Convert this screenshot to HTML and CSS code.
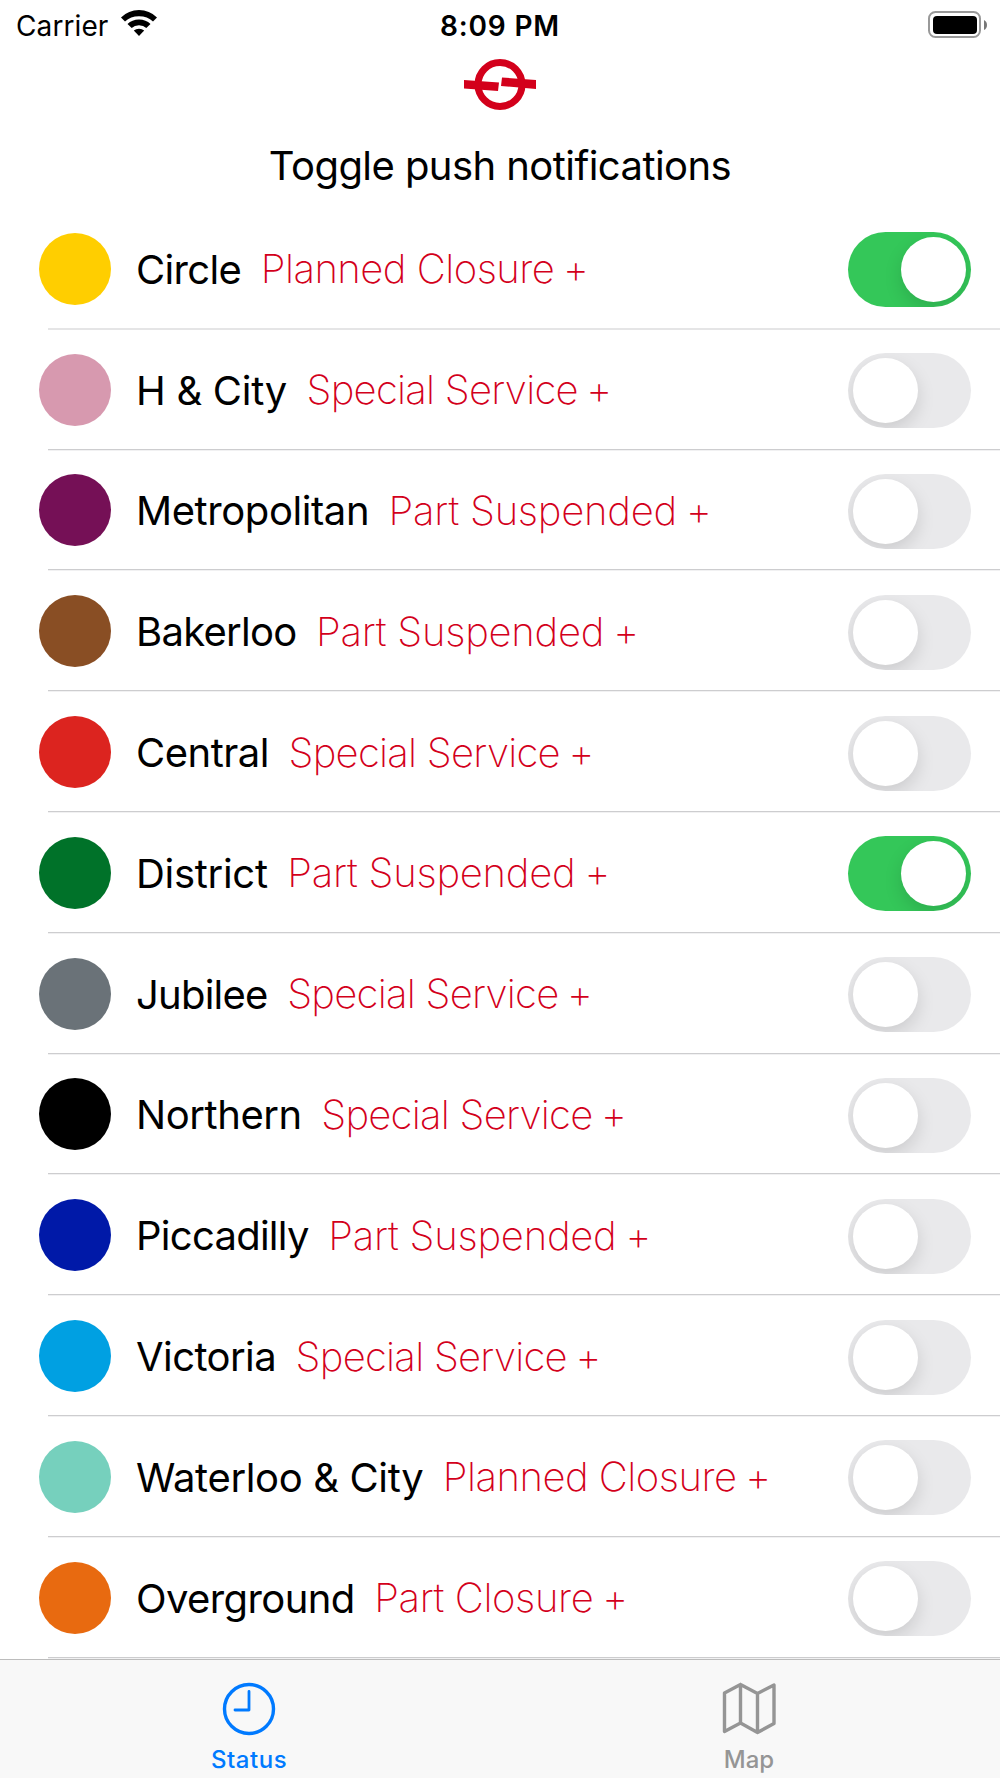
FILE: index.html
```html
<!DOCTYPE html>
<html lang="en">
<head>
<meta charset="utf-8">
<title>Line status</title>
<link rel="stylesheet" href="styles.css">
</head>
<body>
<div class="app">
  <header class="statusbar">
    <div class="carrier"><span class="carrier-name">Carrier</span>
      <svg class="wifi" viewBox="0 0 38 28"><path d="M1 8.500Q8.500 1 19 1T37 8.500L33 12.500Q27.500 7.200 19 7.200T5 12.500Z"/><path d="M7.500 15Q12 10.500 19 10.500T30.500 15L26.300 19Q23.500 16.300 19 16.300T11.700 19Z"/><path d="M13.800 21.500Q16 19.700 19 19.700T24.200 21.500L19 27Z"/></svg>
    </div>
    <div class="time">8:09 PM</div>
    <svg class="battery" viewBox="0 0 60 28"><rect x="1" y="1" width="51" height="25" rx="6.500" fill="none" stroke="#999" stroke-width="2"/><rect x="5" y="5" width="44" height="18" rx="4" fill="#000"/><path d="M56 9Q59 10.500 59 14T56 19Z" fill="#777"/></svg>
  </header>
  <div class="brand">
    <svg class="logo" viewBox="0 0 74 54"><circle cx="37" cy="26.500" r="22" fill="none" stroke="#d3001b" stroke-width="7"/><path d="M1 22L36 24.500L35 33L1 30.500ZM39 19.500L73 22V31L38 28Z" fill="#d3001b"/></svg>
  </div>
  <h1 class="title">Toggle push notifications</h1>
  <main class="lines">
    <div class="row"><i class="dot circle"></i><span class="name name-circle">Circle</span><span class="state planned">Planned Closure <span class="plus">+</span></span><i class="switch on"></i></div>
    <div class="row"><i class="dot hcity"></i><span class="name name-hcity">H &amp; City</span><span class="state special">Special Service <span class="plus">+</span></span><i class="switch"></i></div>
    <div class="row"><i class="dot metropolitan"></i><span class="name name-metropolitan">Metropolitan</span><span class="state part">Part Suspended <span class="plus">+</span></span><i class="switch"></i></div>
    <div class="row"><i class="dot bakerloo"></i><span class="name name-bakerloo">Bakerloo</span><span class="state part">Part Suspended <span class="plus">+</span></span><i class="switch"></i></div>
    <div class="row"><i class="dot central"></i><span class="name name-central">Central</span><span class="state special">Special Service <span class="plus">+</span></span><i class="switch"></i></div>
    <div class="row"><i class="dot district"></i><span class="name name-district">District</span><span class="state part">Part Suspended <span class="plus">+</span></span><i class="switch on"></i></div>
    <div class="row"><i class="dot jubilee"></i><span class="name name-jubilee">Jubilee</span><span class="state special">Special Service <span class="plus">+</span></span><i class="switch"></i></div>
    <div class="row"><i class="dot northern"></i><span class="name name-northern">Northern</span><span class="state special">Special Service <span class="plus">+</span></span><i class="switch"></i></div>
    <div class="row"><i class="dot piccadilly"></i><span class="name name-piccadilly">Piccadilly</span><span class="state part">Part Suspended <span class="plus">+</span></span><i class="switch"></i></div>
    <div class="row"><i class="dot victoria"></i><span class="name name-victoria">Victoria</span><span class="state special">Special Service <span class="plus">+</span></span><i class="switch"></i></div>
    <div class="row"><i class="dot waterloo"></i><span class="name name-waterloo">Waterloo &amp; City</span><span class="state planned">Planned Closure <span class="plus">+</span></span><i class="switch"></i></div>
    <div class="row"><i class="dot overground"></i><span class="name name-overground">Overground</span><span class="state closure">Part Closure <span class="plus">+</span></span><i class="switch"></i></div>
  </main>
  <nav class="tabs">
    <div class="tab active">
      <svg class="tab-icon" viewBox="0 0 54 54"><circle cx="27" cy="27" r="24.500" stroke-width="3.400"/><path d="M27 9.500V28H13" stroke-width="2.800"/></svg>
      <span class="tab-label status-label">Status</span>
    </div>
    <div class="tab">
      <svg class="tab-icon" viewBox="0 0 54 54"><path d="M2.500 11L18.500 2.500L35.500 11.500L52 3V41.500L35.500 50.500L18.500 41L2.500 49.500ZM18.500 2.500V41M35.500 11.500V50.500" stroke-width="3.400"/></svg>
      <span class="tab-label map-label">Map</span>
    </div>
  </nav>
</div>
</body>
</html>
```
FILE: styles.css
```css
* { box-sizing: border-box; }
body { margin: 0; background: #fff; color: #000; font-family: Inter, "Liberation Sans", sans-serif; }
.app { width: 1000px; height: 1778px; display: flex; flex-direction: column; overflow: hidden; }
.statusbar { height: 50px; display: grid; grid-template-columns: 1fr auto 1fr; padding: 0 12px 0 16px; flex: none; align-items: start; }
.carrier { display: flex; }
.carrier-name { font-size: 28px; line-height: 34px; margin-top: 9px; width: 104px; white-space: nowrap; letter-spacing: .1px; }
.wifi { width: 38px; height: 28px; margin-top: 9px; }
.time { font-size: 28px; line-height: 34px; margin: 9px 4px 0 0; font-weight: 600; letter-spacing: .8px; }
.battery { width: 60px; height: 28px; margin-top: 11px; justify-self: end; }
.brand { height: 76px; display: flex; justify-content: center; padding-top: 8px; flex: none; }
.logo { width: 74px; height: 54px; }
.title { margin: 0; height: 83px; padding-top: 16px; font-size: 40px; line-height: 48px; font-weight: 400; letter-spacing: -.56px; text-align: center; flex: none; }
.lines { height: 1450px; display: grid; grid-template-rows: repeat(12, 120.8px); flex: none; overflow: hidden; }
.row { display: flex; align-items: center; padding: 0 29px 0 39px; background: linear-gradient(#cdcdcf 50%, #f1f1f2 50%) 48px 100% / 952px 2px no-repeat; }
.row:first-child { background: linear-gradient(#e5e5e6, #e5e5e6) 48px 100% / 952px 2px no-repeat; }
.dot { width: 72px; height: 72px; border-radius: 50%; margin: 0 25px 1px 0; flex: none; }
.name, .state { font-size: 40px; line-height: 48px; white-space: nowrap; }
.name { margin-top: 1px; }
.name-circle { letter-spacing: -.66px; }
.name-hcity { letter-spacing: -.28px; }
.name-metropolitan { letter-spacing: -.42px; }
.name-bakerloo { letter-spacing: -.74px; }
.name-central { letter-spacing: -.49px; }
.name-district { letter-spacing: -.3px; }
.name-jubilee { letter-spacing: -.76px; }
.name-northern { letter-spacing: -.43px; }
.name-piccadilly { letter-spacing: -.73px; }
.name-victoria { letter-spacing: -.57px; }
.name-waterloo { letter-spacing: -.36px; }
.name-overground { letter-spacing: -.6px; }
.state { font-weight: 200; color: #d3001b; margin-left: 19.500px; }
.planned { letter-spacing: -.5px; }
.special { letter-spacing: -.73px; }
.part { letter-spacing: -.23px; }
.closure { letter-spacing: -.38px; }
.plus { margin-left: -2px; }
.circle { background: #ffce00; }
.hcity { background: #d799af; }
.metropolitan { background: #751056; }
.bakerloo { background: #894e24; }
.central { background: #dc241f; }
.district { background: #007229; }
.jubilee { background: #6a7278; }
.northern { background: #000; }
.piccadilly { background: #0019a8; }
.victoria { background: #00a0e2; }
.waterloo { background: #76d0bd; }
.overground { background: #e86a10; }
.switch { width: 123px; height: 75px; border-radius: 38px; background: #e9e9eb; padding: 5px; margin: 1px 0 0 auto; display: flex; overflow: hidden; flex: none; }
.switch::before { content: ""; width: 65px; height: 65px; border-radius: 50%; background: #fff; box-shadow: 0 7px 18px rgba(0,0,0,.13); }
.switch.on { background: #34c759; justify-content: flex-end; }
.tabs { height: 119px; border-top: 1px solid #bcbcbc; background: #f8f8f8; display: grid; grid-template-columns: 1fr 1fr; flex: none; }
.tab { display: flex; flex-direction: column; align-items: center; padding: 22px 2px 0 0; color: #959595; }
.tab.active { color: #007aff; }
.tab-icon { width: 54px; height: 54px; fill: none; stroke: currentColor; stroke-linejoin: round; stroke-linecap: round; }
.tab-label { font-size: 24px; line-height: 30px; margin-top: 9px; font-weight: 500; }
.status-label { letter-spacing: .55px; }
```
